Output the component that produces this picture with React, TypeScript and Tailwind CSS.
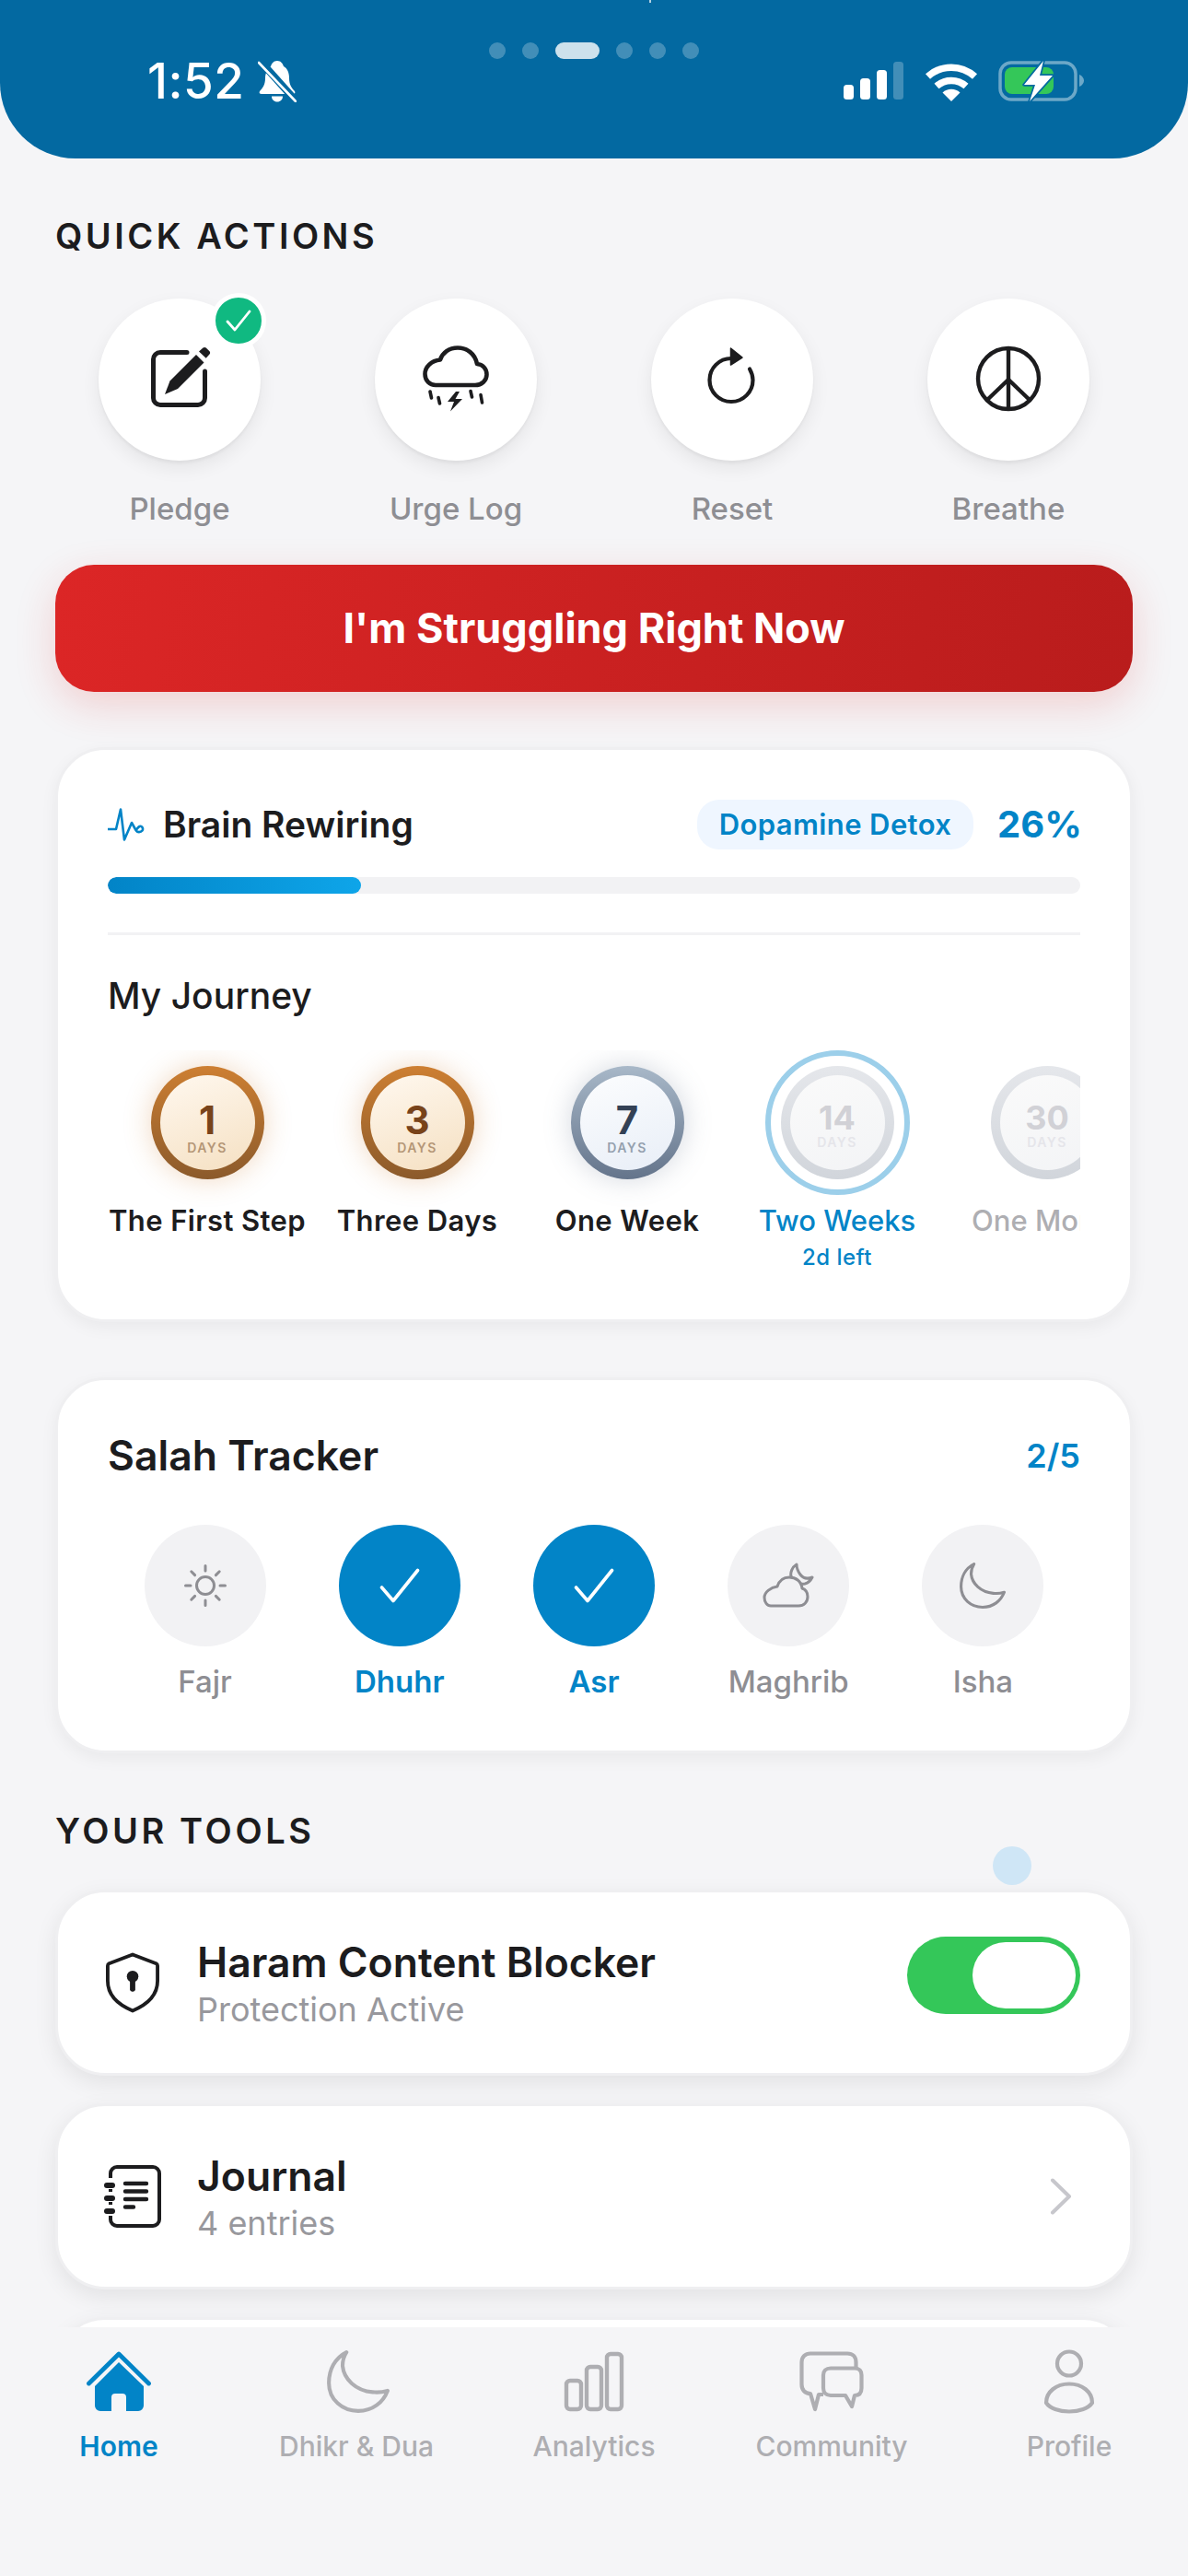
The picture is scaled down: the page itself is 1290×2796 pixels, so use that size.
import React from "react";

const MOON = "M15 1.5C6 6 1.5 15 1.5 25C1.5 38 12 46.5 24 46.5C35 46.5 43 40 46.5 31C43 32 39 32.5 35 32C22 31 13 22 12 12C12 8 13 4.5 15 1.5Z";

function BellSlash() {
  return (
    <svg width="42" height="46" viewBox="0 0 42 46" className="ml-[14px] shrink-0">
      <path d="M21 1C25 1 27 4 28 7C32 9 34 14 34 20C34 27 37 31 40 34C41 36 40 37 38 37H4C2 37 1 36 2 34C5 31 8 27 8 20C8 14 11 9 14 7C15 4 17 1 21 1Z" fill="#fff" />
      <path d="M15 39.5H27C27 43 24.5 45.5 21 45.5C17.5 45.5 15 43 15 39.5Z" fill="#fff" />
      <path d="M5 4L40 43" stroke="#0369a1" strokeWidth="8" />
      <path d="M1 3L41 45" stroke="#fff" strokeWidth="2.6" strokeLinecap="round" />
    </svg>
  );
}

function Signal() {
  return (
    <svg width="66" height="42" viewBox="0 0 66 42" className="shrink-0">
      <rect x="0" y="25" width="11" height="16" rx="3.5" fill="#fff" />
      <rect x="18" y="18" width="11" height="23" rx="3.5" fill="#fff" />
      <rect x="36" y="9" width="11" height="32" rx="3.5" fill="#fff" />
      <rect x="54" y="0" width="11" height="41" rx="3.5" fill="#fff" fillOpacity="0.25" />
    </svg>
  );
}

function Wifi() {
  return (
    <svg width="58" height="43" viewBox="0 0 58 43" className="shrink-0">
      <path d="M3.5 16A38 38 0 0 1 54.5 16" fill="none" stroke="#fff" strokeWidth="7.5" strokeLinejoin="round" />
      <path d="M13 26.5A24 24 0 0 1 45 26.5" fill="none" stroke="#fff" strokeWidth="7.5" />
      <path d="M19.5 33.5A14 14 0 0 1 38.5 33.5L29 43Z" fill="#fff" />
    </svg>
  );
}

function Battery() {
  return (
    <svg width="94" height="46" viewBox="0 0 94 46" className="shrink-0">
      <rect x="2" y="3" width="82" height="40" rx="12" fill="none" stroke="#fff" strokeOpacity="0.42" strokeWidth="3.5" />
      <path d="M88 16C91 17 93 20 93 22.5C93 25 91 28 88 29Z" fill="#fff" fillOpacity="0.42" />
      <rect x="7" y="8" width="53" height="29" rx="8" fill="#34c759" />
      <path d="M49 1L28 27H40L34 45L59 17H45Z" fill="#fff" stroke="#0369a1" strokeWidth="3.5" strokeLinejoin="round" paintOrder="stroke" />
    </svg>
  );
}

function IconPledge() {
  return (
    <svg width="68" height="68" viewBox="0 0 68 68" className="ml-[4px] mt-[-4px]">
      <path d="M40 6.5H11A7.5 7.5 0 0 0 3.5 14V56A7.5 7.5 0 0 0 11 63.5H52A7.5 7.5 0 0 0 59.5 56V27" fill="none" stroke="#1c1c1e" strokeWidth="5" strokeLinecap="round" />
      <path d="M50 9L58.5 17.5L30 46L16 52L21.5 37.5Z" fill="#1c1c1e" />
      <path d="M53 5.5L57.5 1.5C58.5 0.7 59.8 0.7 60.7 1.5L64.5 5.3C65.4 6.3 65.4 7.6 64.5 8.5L60.7 12.7Z" fill="#1c1c1e" />
    </svg>
  );
}

function IconCloud() {
  return (
    <svg width="72" height="72" viewBox="0 0 72 72" className="mt-[-2px]">
      <path d="M14 43H57C64 43 69.5 38 69.5 31.5C69.5 25 65 20.5 59 20C57 9 48 2.5 38 2.5C28.5 2.5 21.5 8 19 15.5C9.5 16.5 2.5 23 2.5 31C2.5 38 7.5 43 14 43Z" fill="none" stroke="#1c1c1e" strokeWidth="4.6" strokeLinejoin="round" />
      <path d="M36 50L27 61H34L30 71.5L43 58H35.5L40 50Z" fill="#1c1c1e" />
      <g stroke="#1c1c1e" strokeWidth="3.6" strokeLinecap="round">
        <path d="M8 50L9.5 57" />
        <path d="M17 56.5L18.5 63" />
        <path d="M52 49.5L53.5 56" />
        <path d="M63 53.5L64.5 62" />
      </g>
    </svg>
  );
}

function IconReset() {
  return (
    <svg width="56" height="64" viewBox="0 0 56 64" className="mt-[-8px]">
      <path d="M27 13A23.5 23.5 0 1 0 50.5 36.5C50.5 32 49 28 47 24.5" fill="none" stroke="#1c1c1e" strokeWidth="4.2" strokeLinecap="round" />
      <path d="M26.5 2L39 12L26.5 20Z" fill="#1c1c1e" stroke="#1c1c1e" strokeWidth="1.5" strokeLinejoin="round" />
    </svg>
  );
}

function IconPeace() {
  return (
    <svg width="72" height="72" viewBox="0 0 72 72" className="mt-[-2px]">
      <g fill="none" stroke="#1c1c1e" strokeWidth="4.4">
        <circle cx="36" cy="36" r="33" />
        <path d="M36 3V69" />
        <path d="M36 37L12.5 59.5" />
        <path d="M36 37L59.5 59.5" />
      </g>
    </svg>
  );
}

function Pulse() {
  return (
    <svg width="40" height="36" viewBox="0 0 40 36" className="shrink-0">
      <path d="M0 23H9L14 1.5L18 34.5L26 16L30.5 24C32 27 36 26.5 37.5 24.5C39 22 37 19 34.5 20C32.5 21 32 23 30.5 24" fill="none" stroke="#0284c7" strokeWidth="2.6" strokeLinejoin="round" strokeLinecap="round" />
    </svg>
  );
}

function IconSun() {
  return (
    <svg width="48" height="48" viewBox="0 0 48 48">
      <g fill="none" stroke="#8e8e93" strokeWidth="3" strokeLinecap="round">
        <circle cx="24" cy="24" r="9.5" />
        <path d="M24 2.5V8M24 40V45.5M2.5 24H8M40 24H45.5M8.8 8.8L12.6 12.6M35.4 35.4L39.2 39.2M8.8 39.2L12.6 35.4M35.4 12.6L39.2 8.8" />
      </g>
    </svg>
  );
}

function IconCheck() {
  return (
    <svg width="44" height="38" viewBox="0 0 44 38">
      <path d="M2.5 21L15 35.5L41.5 2.5" fill="none" stroke="#fff" strokeWidth="3.6" strokeLinecap="round" strokeLinejoin="round" />
    </svg>
  );
}

function IconMaghrib() {
  return (
    <svg width="56" height="50" viewBox="0 0 56 50">
      <g fill="none" stroke="#8e8e93" strokeWidth="3" strokeLinejoin="round">
        <path d="M37 2C32 5 30 11 31 15C33 21 39 24 46 23C50 22 52 20 54 16C49 18 44 17 41 13C38 9 37 6 37 2Z" />
        <path d="M9 47H39C45 47 49 43 49 37C49 32 46 29 43 28C42 20 36 16 29 16C22 16 18 20 16 26C9 27 2 32 2 38C2 43 5 47 9 47Z" fill="#f2f2f4" />
      </g>
    </svg>
  );
}

function IconMoon({ size, color, sw, cls }: { size: number; color: string; sw: number; cls?: string }) {
  return (
    <svg width={size} height={size} viewBox="0 0 48 48" className={cls}>
      <path d={MOON} fill="none" stroke={color} strokeWidth={sw} strokeLinejoin="round" />
    </svg>
  );
}

function IconShield() {
  return (
    <svg width="58" height="66" viewBox="0 0 60 68" className="shrink-0">
      <path d="M30 2.5L56.5 12.5C57.5 13 58 13.7 58 15V32C58 47 47 58.5 30 65.5C13 58.5 2 47 2 32V15C2 13.7 2.5 13 3.5 12.5Z" fill="none" stroke="#1c1c1e" strokeWidth="4" strokeLinejoin="round" />
      <circle cx="30" cy="27" r="6.5" fill="#1c1c1e" />
      <rect x="27" y="28" width="6" height="16" rx="2.5" fill="#1c1c1e" />
    </svg>
  );
}

function IconJournal() {
  return (
    <svg width="64" height="68" viewBox="0 0 64 68" className="shrink-0">
      <path d="M8 14V9A7 7 0 0 1 15 2H54A7 7 0 0 1 61 9V59A7 7 0 0 1 54 66H15A7 7 0 0 1 8 59V55" fill="none" stroke="#1c1c1e" strokeWidth="4" />
      <path d="M8 26V29M8 40V43" stroke="#1c1c1e" strokeWidth="4" />
      <g fill="#1c1c1e">
        <rect x="1" y="19" width="12" height="6" rx="3" />
        <rect x="1" y="33" width="12" height="6" rx="3" />
        <rect x="1" y="47" width="12" height="6" rx="3" />
      </g>
      <g stroke="#1c1c1e" strokeWidth="4.4" strokeLinecap="round">
        <path d="M24 20H47M24 28.5H47M24 37H47M24 45.5H33" />
      </g>
    </svg>
  );
}

function Chevron() {
  return (
    <svg width="24" height="40" viewBox="0 0 24 40" className="mr-[9px] shrink-0">
      <path d="M3 2.5L21 20L3 37.5" fill="none" stroke="#c7c7cc" strokeWidth="4" strokeLinecap="round" strokeLinejoin="round" />
    </svg>
  );
}

function TabHome() {
  return (
    <svg width="70" height="66" viewBox="0 0 70 66">
      <path d="M2.5 35L35 3L67.5 35" fill="none" stroke="#0284c7" strokeWidth="4.8" strokeLinecap="round" strokeLinejoin="round" />
      <path fillRule="evenodd" clipRule="evenodd" d="M35 12L62 38V59A6 6 0 0 1 56 65H43V50A4 4 0 0 0 39 46H31A4 4 0 0 0 27 50V65H15A6 6 0 0 1 9 59V38Z" fill="#0284c7" />
    </svg>
  );
}

function TabBars() {
  return (
    <svg width="66" height="66" viewBox="0 0 66 66">
      <g fill="none" stroke="#aeaeb2" strokeWidth="4.4">
        <rect x="3" y="32" width="16" height="31" rx="4" />
        <rect x="25" y="17" width="16" height="46" rx="4" />
        <rect x="47" y="3" width="16" height="60" rx="4" />
      </g>
    </svg>
  );
}

function TabChat() {
  return (
    <svg width="70" height="66" viewBox="0 0 70 66">
      <g fill="none" stroke="#aeaeb2" strokeWidth="4.2" strokeLinejoin="round">
        <path d="M26 47H21L17 63L12 46H12C6 46 2.5 42 2.5 36V12C2.5 6 6.5 2.5 12 2.5H52C58 2.5 61.5 6 61.5 12V18" />
        <path d="M34 18.5H60C65 18.5 67.5 21.5 67.5 26V40C67.5 45 65 48 60 48H60L57 60L50 48H34C29 48 26 45 26 40V26C26 21.5 29 18.5 34 18.5Z" />
      </g>
    </svg>
  );
}

function TabPerson() {
  return (
    <svg width="56" height="70" viewBox="0 0 56 70">
      <g fill="none" stroke="#aeaeb2" strokeWidth="4.2" strokeLinejoin="round">
        <circle cx="28" cy="15.5" r="13" />
        <path d="M3 58C3 46 14 37.5 28 37.5C42 37.5 53 46 53 58C49 64 39 67.5 28 67.5C17 67.5 7 64 3 58Z" />
      </g>
    </svg>
  );
}

function QuickAction({ label, icon, done }: { label: string; icon: React.ReactNode; done?: boolean }) {
  return (
    <div className="flex w-[270px] flex-col items-center">
      <div className="relative flex h-[176px] w-[176px] items-center justify-center rounded-full bg-white shadow-[0_3px_3px_rgba(0,0,0,0.04),0_8px_20px_rgba(0,0,0,0.07)]">
        {icon}
        {done && (
          <div className="absolute right-[-6px] top-[-6px] flex h-[60px] w-[60px] items-center justify-center rounded-full border-[5px] border-white bg-[#10b981]">
            <svg width="28" height="24" viewBox="0 0 28 24">
              <path d="M2 13L10 22L26 2" fill="none" stroke="#fff" strokeWidth="2.8" strokeLinecap="round" strokeLinejoin="round" />
            </svg>
          </div>
        )}
      </div>
      <div className="mt-[32px] text-[33px] font-medium leading-[40px] text-[#8e8e93]">{label}</div>
    </div>
  );
}

function Milestone(p: {
  n: string;
  label: string;
  ring: string;
  inner: string;
  glow: string;
  num: string;
  days: string;
  text: string;
  small?: boolean;
  active?: boolean;
  sub?: string;
}) {
  return (
    <div className="flex w-[216px] shrink-0 flex-col items-center">
      <div className="flex h-[156px] w-[156px] items-center justify-center">
        <div className={`relative flex h-[123px] w-[123px] items-center justify-center rounded-full p-[10px] ${p.ring} ${p.glow}`}>
          {p.active && <div className="absolute left-[-17px] top-[-17px] h-[157px] w-[157px] rounded-full border-[6px] border-[#9ccfea]" />}
          <div className={`flex h-full w-full flex-col items-center justify-center rounded-full ${p.small ? "pt-[8px]" : "pt-[10px]"} ${p.inner}`}>
            <div className={`font-bold ${p.small ? "mt-[-4px] text-[36px] leading-[40px]" : "mt-[2px] text-[42px] leading-[42px]"} ${p.num}`}>{p.n}</div>
            <div className={`text-[14px] font-semibold leading-[16px] tracking-[1.4px] ${p.small ? "mt-[-1px]" : "mt-[1px]"} ${p.days}`}>DAYS</div>
          </div>
        </div>
      </div>
      <div className={`mt-[9px] whitespace-nowrap text-[31px] leading-[40px] ${p.text}`}>{p.label}</div>
      {p.sub && <div className="mt-[5px] text-[24px] font-medium leading-[30px] tracking-[0.5px] text-[#0284c7]">{p.sub}</div>}
    </div>
  );
}

function Prayer({ label, icon, done }: { label: string; icon: React.ReactNode; done?: boolean }) {
  return (
    <div className="flex flex-col items-center">
      <div className={`flex h-[132px] w-[132px] items-center justify-center rounded-full ${done ? "bg-[#0284c7]" : "bg-[#f2f2f4]"}`}>{icon}</div>
      <div className={`mt-[18px] text-[33px] leading-[40px] ${done ? "font-semibold text-[#0284c7]" : "font-medium text-[#8e8e93]"}`}>{label}</div>
    </div>
  );
}

function ToolCard({ icon, title, sub, right }: { icon: React.ReactNode; title: string; sub: string; right: React.ReactNode }) {
  return (
    <div className="flex h-[202px] shrink-0 items-center rounded-[54px] border-[3px] border-[#efeff1] bg-white px-[54px] shadow-[0_8px_24px_rgba(0,0,0,0.08)]">
      <div className="flex w-[54px] justify-center">{icon}</div>
      <div className="ml-[43px] flex-1">
        <div className="mt-[3px] text-[44.5px] font-semibold leading-[52px] text-[#1c1c1e]">{title}</div>
        <div className="mt-[2px] text-[36px] leading-[46px] text-[#98989d]">{sub}</div>
      </div>
      {right}
    </div>
  );
}

function Tab({ label, icon, active }: { label: string; icon: React.ReactNode; active?: boolean }) {
  return (
    <div className="flex flex-col items-center">
      <div className="flex h-[70px] items-center justify-center">{icon}</div>
      <div className={`mt-[17px] whitespace-nowrap text-[30px] leading-[36px] ${active ? "font-semibold text-[#0284c7]" : "font-medium text-[#aeaeb2]"}`}>{label}</div>
    </div>
  );
}

export default function App() {
  return (
    <div className="relative flex h-[2796px] w-[1290px] flex-col overflow-hidden bg-[#f5f5f7] font-[Inter,sans-serif] text-[#1c1c1e]">
      {/* status header */}
      <div className="relative h-[172px] shrink-0 rounded-b-[82px] bg-[#0369a1]">
        <div className="absolute left-[705px] top-0 h-[3px] w-[2px] bg-white/70" />
        <div className="absolute left-[531px] top-[46px] flex items-center gap-[18px]">
          <div className="h-[18px] w-[18px] rounded-full bg-white/25" />
          <div className="h-[18px] w-[18px] rounded-full bg-white/25" />
          <div className="h-[18px] w-[48px] rounded-full bg-white/80" />
          <div className="h-[18px] w-[18px] rounded-full bg-white/25" />
          <div className="h-[18px] w-[18px] rounded-full bg-white/25" />
          <div className="h-[18px] w-[18px] rounded-full bg-white/25" />
        </div>
        <div className="flex h-full items-start justify-between pl-[160px] pr-[112px] pt-[65px]">
          <div className="flex items-center">
            <span className="text-[53px] font-medium leading-[46px] tracking-[0.5px] text-white">1:52</span>
            <BellSlash />
          </div>
          <div className="flex items-center gap-[22px]">
            <Signal />
            <Wifi />
            <Battery />
          </div>
        </div>
      </div>

      {/* scrolling content */}
      <div className="flex min-h-0 flex-1 flex-col overflow-hidden px-[60px]">
        <div className="mt-[60px] shrink-0 text-[38px] font-semibold leading-[48px] tracking-[3.5px] text-[#1c1c1e]">QUICK ACTIONS</div>
        <div className="mt-[44px] flex shrink-0 justify-between">
          <QuickAction label="Pledge" icon={<IconPledge />} done />
          <QuickAction label="Urge Log" icon={<IconCloud />} />
          <QuickAction label="Reset" icon={<IconReset />} />
          <QuickAction label="Breathe" icon={<IconPeace />} />
        </div>
        <div className="mt-[41px] flex h-[138px] shrink-0 items-center justify-center rounded-[42px] bg-[linear-gradient(100deg,#dc2626,#b91c1c)] text-[45px] font-bold text-white shadow-[0_14px_44px_rgba(220,38,38,0.18)]">
          I'm Struggling Right Now
        </div>

        {/* journey card */}
        <div className="mt-[60px] shrink-0 rounded-[54px] border-[3px] border-[#efeff1] bg-white px-[54px] pb-[52px] pt-[54px] shadow-[0_6px_18px_rgba(0,0,0,0.05)]">
          <div className="flex h-[54px] items-center">
            <Pulse />
            <div className="ml-[20px] flex-1 text-[39px] font-semibold">Brain Rewiring</div>
            <div className="flex h-[54px] w-[300px] items-center justify-center rounded-[24px] bg-[#eff6ff] text-[31px] font-semibold tracking-[0.4px] text-[#0284c7]">Dopamine Detox</div>
            <div className="ml-[26px] w-[90px] text-right text-[40px] font-bold text-[#0284c7]">26%</div>
          </div>
          <div className="mt-[30px] h-[18px] overflow-hidden rounded-full bg-[#f2f2f4]">
            <div className="h-full w-[26%] rounded-full bg-[linear-gradient(90deg,#0284c7,#0ea5e9)]" />
          </div>
          <div className="mt-[42px] h-[3px] bg-[#f2f2f4]" />
          <div className="mt-[42px] text-[39px] font-medium leading-[48px]">My Journey</div>
          <div className="mt-[35px] flex gap-[12px] overflow-hidden">
            <Milestone n="1" label="The First Step" ring="bg-[linear-gradient(180deg,#cd7f32,#8b5a2b)]" inner="bg-[linear-gradient(160deg,#fff8ef,#f5e0c2)]" glow="shadow-[0_0_30px_rgba(205,127,50,0.3)]" num="text-[#78431a]" days="text-[#b49676]" text="font-semibold tracking-[0.4px] text-[#1c1c1e]" />
            <Milestone n="3" label="Three Days" ring="bg-[linear-gradient(180deg,#cd7f32,#8b5a2b)]" inner="bg-[linear-gradient(160deg,#fff8ef,#f5e0c2)]" glow="shadow-[0_0_30px_rgba(205,127,50,0.3)]" num="text-[#78431a]" days="text-[#b49676]" text="font-semibold tracking-[0.4px] text-[#1c1c1e]" />
            <Milestone n="7" label="One Week" ring="bg-[linear-gradient(180deg,#a8b8c8,#64748b)]" inner="bg-[linear-gradient(160deg,#fcfdfe,#e8eef7)]" glow="shadow-[0_0_30px_rgba(100,116,139,0.28)]" num="text-[#334155]" days="text-[#94a0ae]" text="font-semibold tracking-[0.4px] text-[#1c1c1e]" />
            <Milestone n="14" small active label="Two Weeks" sub="2d left" ring="bg-[linear-gradient(180deg,#e5e7eb,#d1d5db)]" inner="bg-[linear-gradient(160deg,#fafafa,#f3f4f6)]" glow="" num="text-[#d1d1d6]" days="text-[#e5e5ea]" text="font-medium text-[#0284c7]" />
            <Milestone n="30" small label="One Month" ring="bg-[linear-gradient(180deg,#e5e7eb,#d1d5db)]" inner="bg-[linear-gradient(160deg,#fafafa,#f3f4f6)]" glow="" num="text-[#d1d1d6]" days="text-[#e5e5ea]" text="font-medium text-[#aeaeb2]" />
          </div>
        </div>

        {/* salah */}
        <div className="mt-[60px] shrink-0 rounded-[54px] border-[3px] border-[#efeff1] bg-white px-[54px] pb-[55px] pt-[54px] shadow-[0_6px_18px_rgba(0,0,0,0.05)]">
          <div className="flex h-[54px] items-center justify-between pt-[2px]">
            <div className="text-[44.5px] font-semibold">Salah Tracker</div>
            <div className="text-[36px] font-semibold text-[#0284c7]">2/5</div>
          </div>
          <div className="mt-[49px] grid grid-cols-5">
            <Prayer label="Fajr" icon={<IconSun />} />
            <Prayer label="Dhuhr" done icon={<IconCheck />} />
            <Prayer label="Asr" done icon={<IconCheck />} />
            <Prayer label="Maghrib" icon={<IconMaghrib />} />
            <Prayer label="Isha" icon={<IconMoon size={50} color="#8e8e93" sw={3} />} />
          </div>
        </div>

        {/* tools */}
        <div className="mt-[60px] shrink-0 text-[38px] font-semibold leading-[48px] tracking-[3.6px] text-[#1c1c1e]">YOUR TOOLS</div>
        <div className="mt-[40px] flex flex-col gap-[30px]">
          <ToolCard
            icon={<IconShield />}
            title="Haram Content Blocker"
            sub="Protection Active"
            right={
              <div className="mb-[16px] flex h-[84px] w-[188px] items-center justify-end rounded-full bg-[#34c759] pr-[5px]">
                <div className="h-[72px] w-[112px] rounded-full bg-white" />
              </div>
            }
          />
          <ToolCard icon={<IconJournal />} title="Journal" sub="4 entries" right={<Chevron />} />
          <div className="h-[202px] shrink-0 rounded-[54px] border-[3px] border-[#efeff1] bg-white shadow-[0_8px_24px_rgba(0,0,0,0.08)]" />
        </div>
      </div>

      {/* floating dot */}
      <div className="absolute left-[1078px] top-[2004px] h-[42px] w-[42px] rounded-full bg-[#cfe6f6]" />

      {/* tab bar */}
      <div className="grid h-[270px] shrink-0 grid-cols-5 bg-[#f5f5f7] pt-[24px]">
        <Tab active label="Home" icon={<TabHome />} />
        <Tab label="Dhikr & Dua" icon={<IconMoon size={68} color="#aeaeb2" sw={2.9} cls="ml-[3px]" />} />
        <Tab label="Analytics" icon={<TabBars />} />
        <Tab label="Community" icon={<TabChat />} />
        <Tab label="Profile" icon={<TabPerson />} />
      </div>
    </div>
  );
}
